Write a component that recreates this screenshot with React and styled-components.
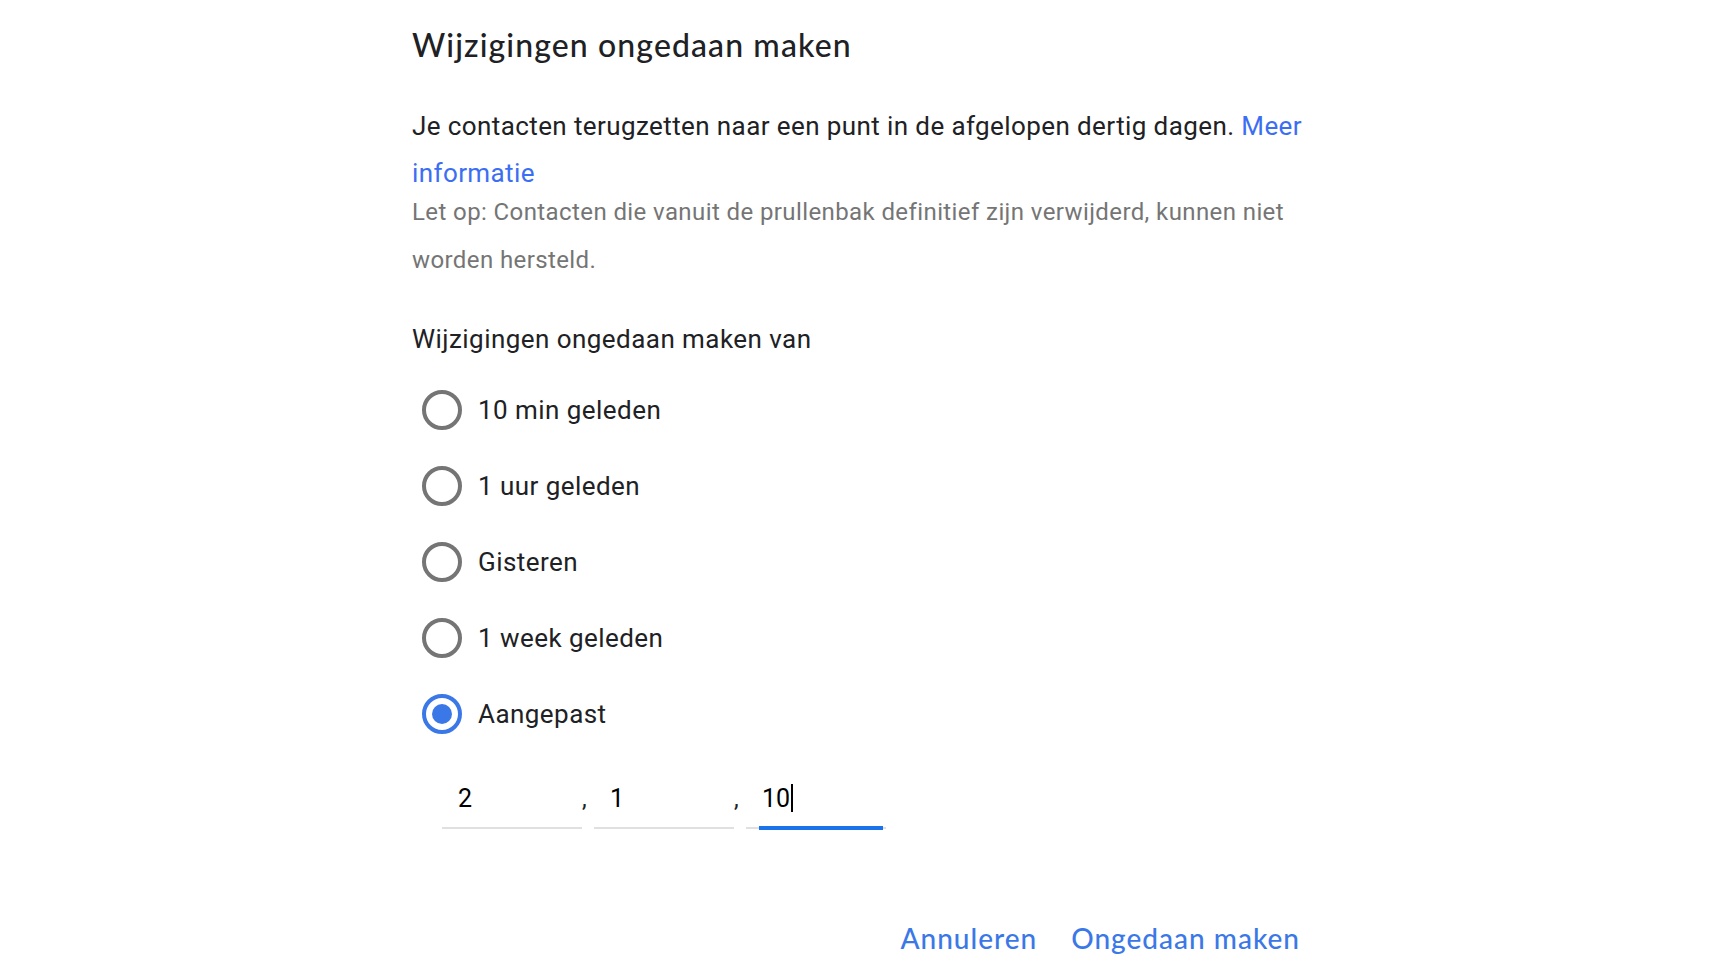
import React from "react";
import styled, { createGlobalStyle } from "styled-components";

const GlobalStyle = createGlobalStyle`
  html, body {
    margin: 0;
    padding: 0;
    background: #ffffff;
  }
  body {
    font-family: Roboto, "Liberation Sans", sans-serif;
    color: #202124;
  }
`;

const Page = styled.div`
  width: 1728px;
  height: 972px;
  overflow: hidden;
  box-sizing: border-box;
  padding: 25px 0 0 412px;
`;

const Dialog = styled.div`
  width: 900px;
  display: flex;
  flex-direction: column;
`;

const Title = styled.h1`
  margin: 0;
  font-family: Lato, "Open Sans", sans-serif;
  font-size: 32px;
  line-height: 40px;
  font-weight: 500;
  letter-spacing: 1.1px;
  color: #202124;
`;

const Intro = styled.p`
  margin: 38px 0 0;
  font-size: 26px;
  line-height: 47px;
  letter-spacing: 0.4px;
  color: #202124;
`;

const Link = styled.a`
  color: #3b6ef2;
  text-decoration: none;
`;

const Note = styled.p`
  margin: -9px 0 0;
  font-size: 24px;
  line-height: 48px;
  letter-spacing: 0.4px;
  color: #757575;
`;

const Subheading = styled.div`
  margin-top: 39px;
  font-size: 26px;
  line-height: 32px;
  letter-spacing: 0.45px;
  color: #202124;
`;

const Options = styled.div`
  margin-top: 17px;
  display: flex;
  flex-direction: column;
`;

const Option = styled.label`
  height: 76px;
  display: flex;
  align-items: center;
  gap: 16px;
  padding-left: 10px;
  font-size: 26px;
  letter-spacing: 0.45px;
  color: #202124;
`;

const Radio = styled.span`
  width: 40px;
  height: 40px;
  box-sizing: border-box;
  border-radius: 50%;
  border: 4px solid ${(p) => (p.checked ? "#3b78e7" : "#757575")};
  display: flex;
  align-items: center;
  justify-content: center;
  flex-shrink: 0;

  &::after {
    content: "";
    width: 20px;
    height: 20px;
    border-radius: 50%;
    background: ${(p) => (p.checked ? "#3b78e7" : "transparent")};
  }
`;

const DateRow = styled.div`
  margin-top: 25px;
  margin-left: 30px;
  display: flex;
  align-items: flex-end;
`;

const Field = styled.div`
  position: relative;
  width: 140px;
  box-sizing: border-box;
  padding: 6px 16px 12px;
  border-bottom: 2px solid #e0e0e0;
  font-size: 25px;
  line-height: 32px;
  color: #000;

  &::after {
    content: "";
    display: ${(p) => (p.focused ? "block" : "none")};
    position: absolute;
    left: 13px;
    right: 3px;
    bottom: -3px;
    height: 4px;
    background: #1a73e8;
  }
`;

const Separator = styled.span`
  width: 12px;
  padding-bottom: 14px;
  font-size: 24px;
  line-height: 32px;
  color: #202124;
  text-align: left;
`;

const Caret = styled.span`
  display: inline-block;
  width: 2px;
  height: 28px;
  margin-left: 1px;
  vertical-align: -5px;
  background: #000;
`;

const Actions = styled.div`
  margin-top: 91px;
  display: flex;
  justify-content: flex-end;
  gap: 34px;
  padding-right: 12px;
`;

const TextButton = styled.button`
  border: none;
  background: none;
  padding: 0;
  font-family: Lato, "Open Sans", sans-serif;
  font-size: 28px;
  line-height: 36px;
  font-weight: 500;
  letter-spacing: 1px;
  color: #3b78e7;
  cursor: pointer;
`;

const options = [
  { label: "10 min geleden" },
  { label: "1 uur geleden" },
  { label: "Gisteren" },
  { label: "1 week geleden" },
  { label: "Aangepast", checked: true },
];

export default function App() {
  return (
    <Page>
      <GlobalStyle />
      <Dialog>
        <Title>Wijzigingen ongedaan maken</Title>
        <Intro>
          Je contacten terugzetten naar een punt in de afgelopen dertig dagen.{" "}
          <Link href="#">Meer informatie</Link>
        </Intro>
        <Note>
          Let op: Contacten die vanuit de prullenbak definitief zijn verwijderd,
          kunnen niet worden hersteld.
        </Note>
        <Subheading>Wijzigingen ongedaan maken van</Subheading>
        <Options>
          {options.map((o) => (
            <Option key={o.label}>
              <Radio checked={o.checked} />
              {o.label}
            </Option>
          ))}
        </Options>
        <DateRow>
          <Field>2</Field>
          <Separator>,</Separator>
          <Field>1</Field>
          <Separator>,</Separator>
          <Field focused>
            10
            <Caret />
          </Field>
        </DateRow>
        <Actions>
          <TextButton>Annuleren</TextButton>
          <TextButton>Ongedaan maken</TextButton>
        </Actions>
      </Dialog>
    </Page>
  );
}
